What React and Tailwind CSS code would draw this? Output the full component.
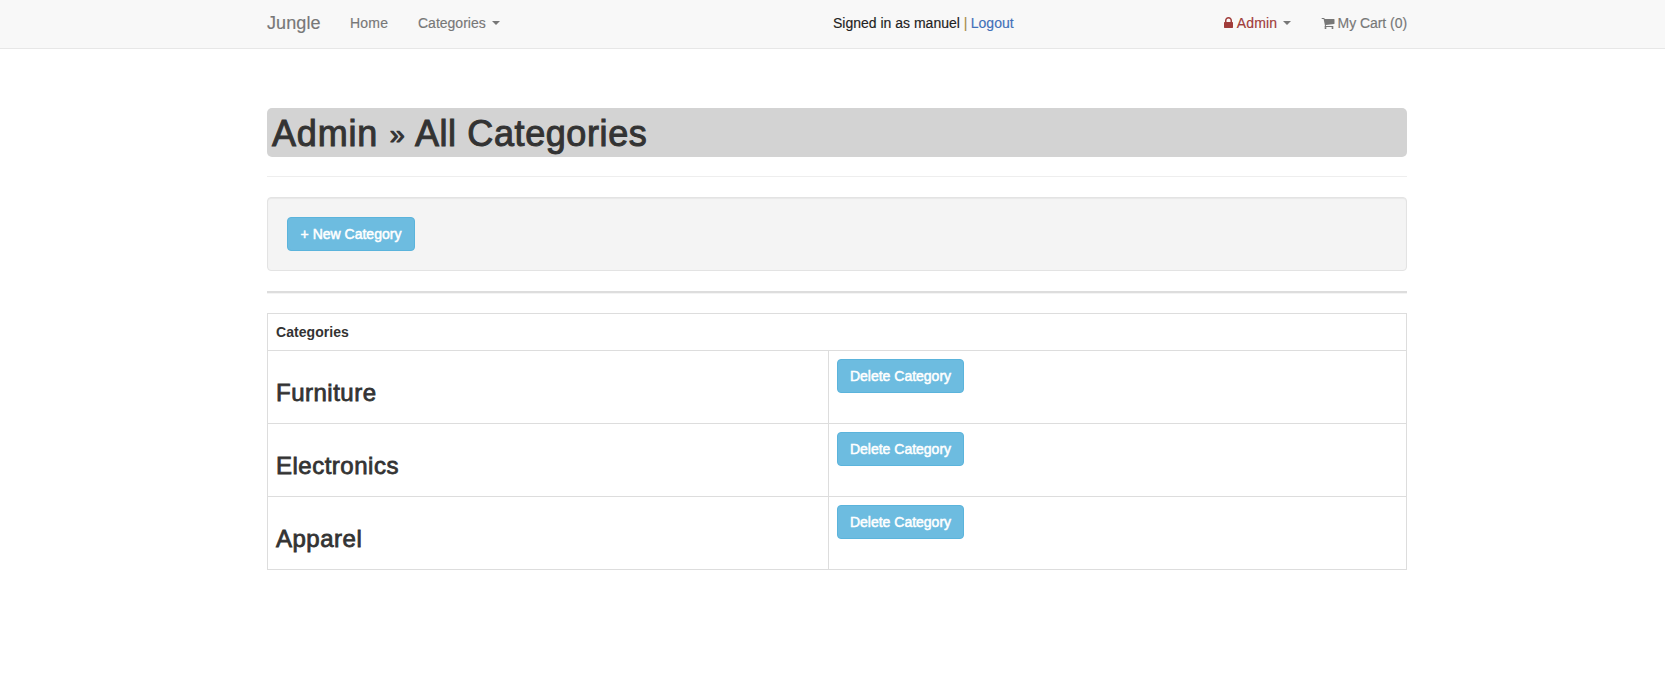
const Caret = ({ className = "" }) => (
  <span className={`inline-block h-0 w-0 border-x-4 border-t-4 border-x-transparent ${className}`} />
);

const LockIcon = () => (
  <svg viewBox="0 0 1152 1792" className="mr-1 h-[14px] w-[9px]" fill="currentColor">
    <path d="M320 768h512v-192q0-106-75-181t-181-75-181 75-75 181v192zm832 96v576q0 40-28 68t-68 28h-960q-40 0-68-28t-28-68v-576q0-40 28-68t68-28h32v-192q0-184 132-316t316-132 316 132 132 316v192h32q40 0 68 28t28 68z" />
  </svg>
);

const CartIcon = () => (
  <svg viewBox="0 0 1792 1792" className="mr-[3px] h-[14px] w-[14px]" fill="currentColor">
    <path d="M704 1536q0 52-38 90t-90 38-90-38-38-90 38-90 90-38 90 38 38 90zm896 0q0 52-38 90t-90 38-90-38-38-90 38-90 90-38 90 38 38 90zm128-1088v512q0 24-16.5 42.5t-40.5 21.5l-1044 122q13 60 13 70 0 16-24 64h920q26 0 45 19t19 45-19 45-45 19h-1024q-26 0-45-19t-19-45q0-11 8-31.5t16-36 21.5-40 15.5-29.5l-177-823h-204q-26 0-45-19t-19-45 19-45 45-19h256q16 0 28.5 6.5t19.5 15.5 13 24.5 8 26 5.5 29.5 4.5 26h1201q26 0 45 19t19 45z" />
  </svg>
);

const Button = ({ children, className = "" }) => (
  <button
    className={`block h-[34px] rounded border border-[#5bb4dc] bg-[#6dbce0] text-center text-[14px] leading-5 whitespace-nowrap text-white [-webkit-text-stroke:0.5px_white] ${className}`}
  >
    {children}
  </button>
);

const categories = ["Furniture", "Electronics", "Apparel"];

export default function App() {
  return (
    <div className="min-h-[694px] bg-white font-['Liberation_Sans',Arial,sans-serif] text-[14px] leading-5 text-[#333]">
      <nav className="h-[49px] border-b border-[#e7e7e7] bg-[#f8f8f8] pl-[267px] text-[#777]">
        <div className="flex h-[46px] w-[1140px] items-center whitespace-nowrap [-webkit-text-stroke:0.15px_currentColor]">
          <a className="w-[83px] text-[18px] tracking-[0.1px]">Jungle</a>
          <a className="w-[68px] tracking-[0.2px]">Home</a>
          <a className="flex w-[415px] items-center">
            <span>Categories</span>
            <Caret className="ml-[6px] border-t-[#777]" />
          </a>
          <p className="text-[#222]">
            Signed in as manuel <span className="text-[#a58a45]">|</span>{" "}
            <a className="-ml-[0.5px] text-[#4170b8]">Logout</a>
          </p>
          <div className="ml-auto flex items-center">
            <a className="flex items-center text-[#a03c3a]">
              <LockIcon />
              <span className="tracking-[0.1px]">Admin</span>
              <Caret className="ml-[5.5px] border-t-[#777]" />
            </a>
            <a className="ml-[30px] flex items-center">
              <CartIcon />
              <span className="tracking-[-0.05px]">My Cart (0)</span>
            </a>
          </div>
        </div>
      </nav>

      <main className="ml-[267px] w-[1140px] pt-[59px]">
        <h1 className="h-[49px] rounded-[5px] bg-[#d3d3d3] p-[5px] text-[36px] leading-[41px] tracking-[0.6px] whitespace-nowrap [-webkit-text-stroke:1px_#333]">
          <span className="tracking-[0.8px]">Admin</span>{" "}
          <span className="relative -top-[2px] mx-[1px] text-[27px] leading-none">»</span> All Categories
        </h1>
        <hr className="mt-[19px] border-t border-[#eee]" />

        <section className="mt-[20px] h-[74px] rounded border border-[#e3e3e3] bg-[#f4f4f4] p-[19px] shadow-[inset_0_1px_1px_rgba(0,0,0,0.05)]">
          <Button className="w-[128px]">+ New Category</Button>
        </section>

        <div className="mt-[20px] h-[2px] bg-[#ddd] shadow-[0_1px_0_#f4f4f4]" />

        <table className="mt-[20px] w-[1140px] table-fixed border-collapse border border-[#ddd]">
          <colgroup>
            <col className="w-[561px]" />
            <col />
          </colgroup>
          <thead>
            <tr className="h-[37px]">
              <th colSpan={2} className="border border-[#ddd] px-2 py-0 text-left font-bold tracking-[0.06px]">
                Categories
              </th>
            </tr>
          </thead>
          <tbody>
            {categories.map((name) => (
              <tr key={name} className="h-[73px]">
                <td className="border border-[#ddd] px-2 pt-[29px] pb-0 align-top">
                  <h3 className="text-[24px] leading-[26px] tracking-[0.5px] [-webkit-text-stroke:0.8px_#333]">
                    {name}
                  </h3>
                </td>
                <td className="border border-[#ddd] px-2 pt-2 pb-0 align-top">
                  <Button className="w-[127px]">Delete Category</Button>
                </td>
              </tr>
            ))}
          </tbody>
        </table>
      </main>
    </div>
  );
}
